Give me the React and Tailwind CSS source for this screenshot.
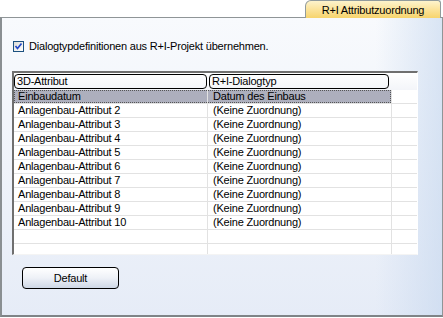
import React from 'react';

const rows = [
  ['Einbaudatum', 'Datum des Einbaus'],
  ['Anlagenbau-Attribut 2', '(Keine Zuordnung)'],
  ['Anlagenbau-Attribut 3', '(Keine Zuordnung)'],
  ['Anlagenbau-Attribut 4', '(Keine Zuordnung)'],
  ['Anlagenbau-Attribut 5', '(Keine Zuordnung)'],
  ['Anlagenbau-Attribut 6', '(Keine Zuordnung)'],
  ['Anlagenbau-Attribut 7', '(Keine Zuordnung)'],
  ['Anlagenbau-Attribut 8', '(Keine Zuordnung)'],
  ['Anlagenbau-Attribut 9', '(Keine Zuordnung)'],
  ['Anlagenbau-Attribut 10', '(Keine Zuordnung)'],
  ['', ''],
  ['', ''],
];

const App = () => {
  return (
    <div className="w-[443px] h-[318px] bg-white text-[11px] leading-[13px] tracking-[-0.2px] text-black overflow-hidden" style={{ fontFamily: '"Liberation Sans", Arial, sans-serif' }}>
      {/* Tab */}
      <div className="flex justify-end pr-[2px] h-[18px]">
        <div className="relative z-10 w-[136px] h-[18px] rounded-tl-[6px] rounded-tr-[3px] border border-b-0 border-[#919b9c] bg-gradient-to-b from-[#fdf3cc] via-[#fbe39a] to-[#f7d46c] flex items-center justify-center pt-[1px]">
          R+I Attributzuordnung
        </div>
      </div>

      {/* Panel */}
      <div className="h-[300px] -mt-px border border-[#8f9597] border-l-2 border-l-[#8a8f92] border-b-2 border-b-[#7f8487] bg-[linear-gradient(to_right,rgba(255,255,255,0)_85%,rgba(196,214,238,0.6)_100%),linear-gradient(to_bottom,#f8fafd,#e6ecf7)] flex flex-col">
        {/* Checkbox row */}
        <div className="flex items-center mt-[22px] ml-[11px] gap-[5px]">
          <div className="w-[11px] h-[11px] border border-[#1c5180] bg-gradient-to-br from-[#dcdcd7] to-white flex items-center justify-center">
            <svg width="9" height="9" viewBox="0 0 9 9">
              <path d="M1.5 4 L3.5 6.5 L7.5 1.5" fill="none" stroke="#2146c6" strokeWidth="1.7" />
            </svg>
          </div>
          <span>Dialogtypdefinitionen aus R+I-Projekt übernehmen.</span>
        </div>

        {/* List */}
        <div className="ml-[10px] mt-[18px] w-[406px] h-[184px] border-l-2 border-t-2 border-l-[#6f6f6f] border-t-[#6f6f6f] border-r border-b border-r-white border-b-[#f4f4f4] bg-white overflow-hidden">
          {/* Header */}
          <div className="flex h-[17px] bg-gradient-to-b from-white to-[#f3f5f9]">
            <div className="w-[194px] pr-[1px] py-[1px] flex">
              <div className="flex-1 border border-black rounded-[4px] pl-[2px] flex items-center">3D-Attribut</div>
            </div>
            <div className="w-[182px] px-[1px] py-[1px] flex">
              <div className="flex-1 border border-black rounded-[4px] pl-[2px] flex items-center">R+I-Dialogtyp</div>
            </div>
            <div className="flex-1" />
          </div>
          {/* Rows */}
          {rows.map((r, i) => (
            <div key={i} className="flex h-[14px] border-b border-[#e2e2e2]">
              <div className={`flex w-[377px] ${i === 0 ? 'bg-[#adafbd] outline-1 outline-dotted outline-offset-[-1px] outline-[#555]' : ''}`}>
                <div className="w-[194px] pl-[4px] border-r border-[#e2e2e2] leading-[13px]">{r[0]}</div>
                <div className="flex-1 pl-[5px] leading-[13px]">{r[1]}</div>
              </div>
              <div className="flex-1 border-l border-[#e2e2e2]" />
            </div>
          ))}
        </div>

        {/* Button */}
        <div className="ml-[20px] mt-[12px]">
          <button className="w-[97px] h-[22px] border border-black rounded-[4px] bg-gradient-to-b from-white via-[#eef1f7] to-[#cfd8e6] flex items-center justify-center">
            Default
          </button>
        </div>
      </div>
    </div>
  );
};

export default App;
